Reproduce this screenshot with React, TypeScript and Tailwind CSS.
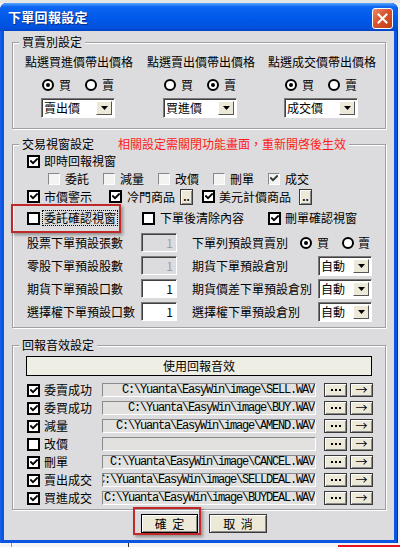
import React from 'react';

// 對話框底色
const BG = 'bg-[#dcdcde]';

function CheckMark({ color }: { color: string }) {
  return (
    <svg width="8" height="7" viewBox="0 0 8 7">
      <path d="M1 3.2 L3 5.2 L7 1.2" stroke={color} strokeWidth="1.9" fill="none" strokeLinecap="square" />
    </svg>
  );
}

function Check({ checked = false, disabled = false }: { checked?: boolean; disabled?: boolean }) {
  if (disabled) {
    return (
      <span className="w-[12px] h-[12px] shrink-0 border border-t-[#888] border-l-[#888] border-b-white border-r-white bg-[#f3f3f1] flex items-center justify-center">
        {checked && <CheckMark color="#333" />}
      </span>
    );
  }
  return (
    <span className="w-[13px] h-[13px] shrink-0 border-2 border-black bg-white flex items-center justify-center">
      {checked && <CheckMark color="#000" />}
    </span>
  );
}

function Radio({ checked = false }: { checked?: boolean }) {
  return (
    <span className="w-[12px] h-[12px] shrink-0 rounded-full border-2 border-black bg-white flex items-center justify-center">
      {checked && <span className="w-[4px] h-[4px] rounded-full bg-black" />}
    </span>
  );
}

function Combo({ value, w }: { value: string; w: string }) {
  return (
    <div className={`${w} h-[20px] flex items-center bg-white border border-t-[#7a7a7a] border-l-[#7a7a7a] border-b-white border-r-white shadow-[inset_1px_1px_0_#404040] pl-[2px] pr-[2px]`}>
      <span className="flex-1 text-[12px] leading-[14px]">{value}</span>
      <span className="w-[16px] h-[14px] bg-[#ece9d8] border border-t-white border-l-white border-b-[#555] border-r-[#555] flex items-center justify-center">
        <svg width="7" height="4" viewBox="0 0 7 4">
          <path d="M0 0 H7 L3.5 4 Z" fill="#000" />
        </svg>
      </span>
    </div>
  );
}

function NumBox({ disabled = false }: { disabled?: boolean }) {
  return (
    <div
      className={`w-[36px] h-[19px] shrink-0 flex items-center justify-end pr-[3px] border border-t-[#7a7a7a] border-l-[#7a7a7a] border-b-white border-r-white shadow-[inset_1px_1px_0_#404040] text-[12px] ${
        disabled ? 'bg-[#dcdcde] text-[#a0a0a0]' : 'bg-white text-black'
      }`}
    >
      1
    </div>
  );
}

function Btn({ children, className = '' }: { children: React.ReactNode; className?: string }) {
  return (
    <div
      className={`flex items-center justify-center bg-[#ece9d8] border border-[#3a3a3a] shadow-[inset_1px_1px_0_#fff,inset_-1px_-1px_0_#8a8a8a] ${className}`}
    >
      {children}
    </div>
  );
}

function Dots() {
  return (
    <svg width="10" height="2" viewBox="0 0 10 2">
      <rect x="0" y="0" width="2" height="2" fill="#000" />
      <rect x="4" y="0" width="2" height="2" fill="#000" />
      <rect x="8" y="0" width="2" height="2" fill="#000" />
    </svg>
  );
}

function Group({
  label,
  extra,
  className = '',
  children,
}: {
  label: string;
  extra?: React.ReactNode;
  className?: string;
  children: React.ReactNode;
}) {
  return (
    <div className={`relative border border-[#a0a0a0] shadow-[inset_1px_1px_0_#fff,1px_1px_0_#fff] ${className}`}>
      <div className={`absolute left-[6px] -top-[8px] px-[3px] ${BG} flex text-[12px] leading-[14px]`}>
        <span>{label}</span>
        {extra}
      </div>
      {children}
    </div>
  );
}

const priceCols = [
  { title: '點選買進價帶出價格', buy: true, value: '賣出價' },
  { title: '點選賣出價帶出價格', buy: false, value: '買進價' },
  { title: '點選成交價帶出價格', buy: true, value: '成交價' },
];

const sounds = [
  { name: '委賣成功', on: true, path: 'C:\\Yuanta\\EasyWin\\image\\SELL.WAV' },
  { name: '委買成功', on: true, path: 'C:\\Yuanta\\EasyWin\\image\\BUY.WAV' },
  { name: '減量', on: true, path: 'C:\\Yuanta\\EasyWin\\image\\AMEND.WAV' },
  { name: '改價', on: false, path: '' },
  { name: '刪單', on: true, path: 'C:\\Yuanta\\EasyWin\\image\\CANCEL.WAV' },
  { name: '賣出成交', on: true, path: 'C:\\Yuanta\\EasyWin\\image\\SELLDEAL.WAV' },
  { name: '買進成交', on: true, path: 'C:\\Yuanta\\EasyWin\\image\\BUYDEAL.WAV' },
];

export default function App() {
  return (
    <div className="w-[400px] h-[547px] overflow-hidden bg-[#f2f2f2] flex flex-col font-['Noto_Sans_CJK_TC','Liberation_Sans',sans-serif] text-black">
      <div className="h-[3px] bg-[#e6e6e6]" />

      {/* 視窗 */}
      <div className="w-[398px] h-[540px] flex flex-col rounded-t-[7px] bg-[#0a56e2] shadow-[inset_-1px_0_0_#0032a8,inset_1px_0_0_#1a60e8]">
        {/* 標題列 */}
        <div className="h-[28px] rounded-t-[7px] flex items-center pl-[8px] pr-[5px] bg-[linear-gradient(to_bottom,#5aa6ff_0%,#0c66f2_14%,#0058e8_55%,#0052de_88%,#0044c6_100%)]">
          <span className="text-white font-bold text-[13px] leading-[16px] tracking-[0.3px] [text-shadow:1px_1px_0_#0a2a80]">
            下單回報設定
          </span>
          <div className="ml-auto mt-[3px] w-[21px] h-[21px] rounded-[3px] border border-white bg-[linear-gradient(135deg,#ec8a6a_0%,#d8532e_45%,#c23c18_100%)] flex items-center justify-center">
            <svg width="11" height="11" viewBox="0 0 11 11">
              <path d="M1.5 1.5 L9.5 9.5 M9.5 1.5 L1.5 9.5" stroke="#fff" strokeWidth="2" strokeLinecap="square" />
            </svg>
          </div>
        </div>

        {/* 內容區 */}
        <div className={`mx-[4px] mb-[3px] flex-1 ${BG} px-[8px] flex flex-col`}>
          {/* 買賣別設定 */}
          <Group label="買賣別設定" className="mt-[11px] h-[87px]">
            <div className="grid grid-cols-[122px_121px_121px] pl-[12px] pt-[12px] text-[12px] leading-[14px]">
              {priceCols.map((c) => (
                <div key={c.title} className="flex flex-col">
                  <span>{c.title}</span>
                  <div className="flex items-center mt-[9px] pl-[17px] h-[14px]">
                    <Radio checked={c.buy} />
                    <span className="ml-[5px]">買</span>
                    <span className="ml-[14px]"><Radio checked={!c.buy} /></span>
                    <span className="ml-[5px]">賣</span>
                  </div>
                  <div className="mt-[6px] pl-[16px]">
                    <Combo value={c.value} w="w-[74px]" />
                  </div>
                </div>
              ))}
            </div>
          </Group>

          {/* 交易視窗設定 */}
          <Group
            label="交易視窗設定"
            extra={<span className="ml-[24px] text-[#ff1a1a]">相關設定需關閉功能畫面，重新開啓後生效</span>}
            className="mt-[15px] h-[184px]"
          >
            <div className="relative flex flex-col pt-[7px] text-[12px] leading-[14px]">
              <div className="h-[18px] flex items-center pl-[14px] gap-[4px]">
                <Check checked />
                <span>即時回報視窗</span>
              </div>

              <div className="h-[17px] flex items-center pl-[35px]">
                {[
                  ['委託', false],
                  ['減量', false],
                  ['改價', false],
                  ['刪單', false],
                  ['成交', true],
                ].map(([t, c]) => (
                  <div key={t as string} className="w-[55px] flex items-center gap-[5px]">
                    <Check disabled checked={c as boolean} />
                    <span>{t as string}</span>
                  </div>
                ))}
              </div>

              <div className="h-[19px] flex items-center pl-[14px]">
                <div className="w-[82px] flex items-center gap-[4px]">
                  <Check checked />
                  <span>市價警示</span>
                </div>
                <Check checked />
                <span className="ml-[5px]">冷門商品</span>
                <Btn className="ml-[5px] w-[13px] h-[16px] text-[10px] leading-[10px] font-bold">..</Btn>
                <span className="ml-[9px]"><Check checked /></span>
                <span className="ml-[4px]">美元計價商品</span>
                <Btn className="ml-[8px] w-[13px] h-[16px] text-[10px] leading-[10px] font-bold">..</Btn>
              </div>

              <div className="h-[18px] mt-[3px] flex items-center pl-[14px]">
                <div className="w-[115px] flex items-center gap-[3px]">
                  <Check />
                  <span className="outline outline-1 outline-dotted outline-black px-[1px]">委託確認視窗</span>
                </div>
                <div className="w-[126px] flex items-center gap-[5px]">
                  <Check />
                  <span>下單後清除內容</span>
                </div>
                <div className="flex items-center gap-[4px]">
                  <Check checked />
                  <span>刪單確認視窗</span>
                </div>
              </div>

              <div className="mt-[4px] flex flex-col">
                <div className="h-[23px] flex items-center pl-[14px]">
                  <span className="w-[114px]">股票下單預設張數</span>
                  <NumBox disabled />
                  <span className="ml-[15px] w-[108px]">下單列預設買賣別</span>
                  <Radio checked />
                  <span className="ml-[5px]">買</span>
                  <span className="ml-[13px]"><Radio /></span>
                  <span className="ml-[4px]">賣</span>
                </div>
                <div className="h-[23px] flex items-center pl-[14px]">
                  <span className="w-[114px]">零股下單預設股數</span>
                  <NumBox disabled />
                  <span className="ml-[15px] w-[126px]">期貨下單預設倉別</span>
                  <Combo value="自動" w="w-[54px]" />
                </div>
                <div className="h-[23px] flex items-center pl-[14px]">
                  <span className="w-[114px]">期貨下單預設口數</span>
                  <NumBox />
                  <span className="ml-[15px] w-[126px] whitespace-nowrap">期貨價差下單預設倉別</span>
                  <Combo value="自動" w="w-[54px]" />
                </div>
                <div className="h-[23px] flex items-center pl-[14px]">
                  <span className="w-[114px]">選擇權下單預設口數</span>
                  <NumBox />
                  <span className="ml-[15px] w-[126px]">選擇權下單預設倉別</span>
                  <Combo value="自動" w="w-[54px]" />
                </div>
              </div>

              {/* 標示框 */}
              <div className="absolute left-[-2px] top-[59px] w-[110px] h-[29px] border-2 border-[#c0282a] shadow-[2px_2px_3px_rgba(0,0,0,0.35)]" />
            </div>
          </Group>

          {/* 回報音效設定 */}
          <Group label="回報音效設定" className="mt-[17px] h-[165px]">
            <div className="flex flex-col text-[12px] leading-[14px]">
              <div className="ml-[13px] mt-[10px] w-[346px] h-[20px] border border-black bg-[#efeee5] flex items-center justify-center">
                使用回報音效
              </div>
              <div className="mt-[7px] flex flex-col">
                {sounds.map((s) => (
                  <div key={s.name} className="h-[18px] flex items-start pl-[14px]">
                    <div className="w-[75px] h-[14px] flex items-center gap-[4px]">
                      <Check checked={s.on} />
                      <span>{s.name}</span>
                    </div>
                    <div className="w-[214px] h-[14px] overflow-hidden flex items-center justify-end pr-[1px] bg-[#e2e1df] border border-t-[#8a8a8a] border-l-[#8a8a8a] border-b-white border-r-white">
                      <span className="whitespace-nowrap font-['Liberation_Mono',monospace] text-[12px] tracking-[-1.2px] leading-[12px]">
                        {s.path}
                      </span>
                    </div>
                    <Btn className="ml-[8px] w-[23px] h-[14px]"><Dots /></Btn>
                    <Btn className="ml-[3px] w-[23px] h-[14px] text-[12px] leading-[12px]">→</Btn>
                  </div>
                ))}
              </div>
            </div>
          </Group>

          {/* 確定/取消 */}
          <div className="mt-[4px] flex pl-[129px] text-[12px] leading-[14px]">
            <div className="relative">
              <Btn className="w-[57px] h-[19px] border-black">確&nbsp;&nbsp;定</Btn>
              <div className="absolute -left-[8px] -top-[7px] w-[68px] h-[28px] border-2 border-[#c0282a] shadow-[2px_2px_3px_rgba(0,0,0,0.35)]" />
            </div>
            <Btn className="ml-[11px] w-[58px] h-[19px]">取&nbsp;&nbsp;消</Btn>
          </div>
        </div>
      </div>

      {/* 視窗下方 */}
      <div className="flex-1 relative flex bg-[#f4f4f4]">
        <div className="ml-[11px] w-[1px] bg-[#999]" />
        <div className="ml-[116px] w-[1px] bg-[#333]" />
        <div className="ml-auto mt-[2px] w-[62px] h-[2px] bg-[#e8141a]" />
      </div>
    </div>
  );
}
